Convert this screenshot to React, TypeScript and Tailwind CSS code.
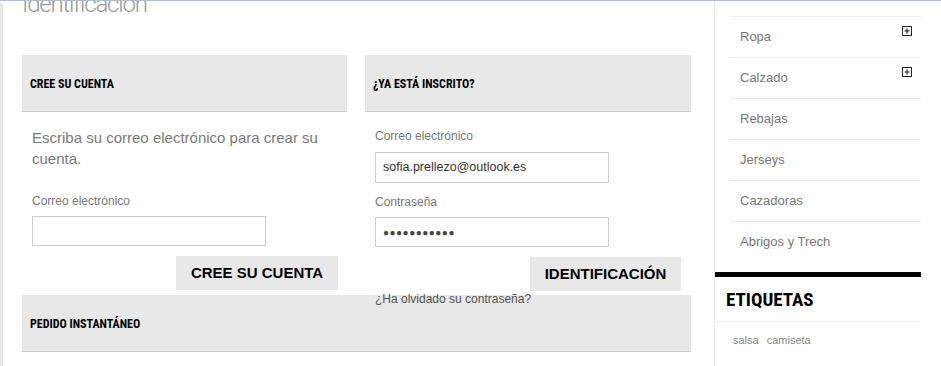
import React from "react";

const cond = { fontFamily: '"Roboto Condensed", "Liberation Sans Narrow", Roboto, sans-serif' };

function PlusBox() {
  return (
    <svg width="10" height="10" viewBox="0 0 10 10" className="block">
      <rect x="0.5" y="0.5" width="9" height="9" fill="none" stroke="#222" strokeWidth="1" />
      <path d="M2.5 5H7.5M5 2.5V7.5" stroke="#222" strokeWidth="1.2" />
    </svg>
  );
}

export default function App() {
  const cats = [
    { name: "Ropa", plus: true },
    { name: "Calzado", plus: true },
    { name: "Rebajas", plus: false },
    { name: "Jerseys", plus: false },
    { name: "Cazadoras", plus: false },
    { name: "Abrigos y Trech", plus: false },
  ];
  return (
    <div
      className="w-[941px] h-[366px] overflow-hidden bg-white border-t border-[#a9c0dc] flex"
      style={{ fontFamily: '"Liberation Sans", Arial, sans-serif' }}
    >
      <div className="w-[3px] mt-[2px] bg-[#e8e8e8] shrink-0" />
      {/* main */}
      <div className="w-[711px] shrink-0 pl-[19px] pr-[23px]">
        <h1
          className="text-[24px] leading-[24px] font-light text-[#999] mt-[-9px] h-[63px] tracking-[-1.2px]"
          style={{ fontFamily: "Roboto, sans-serif" }}
        >
          Identificación
        </h1>
        <div className="grid grid-cols-[325px_326px] gap-x-[18px] h-[240px]">
          {/* left column */}
          <div className="flex flex-col">
            <div className="h-[57px] bg-[#e8e8e8] border-b border-[#ccc] flex items-center pl-[8px] pt-[1px]">
              <span className="text-[12px] font-bold text-black" style={cond}>
                CREE SU CUENTA
              </span>
            </div>
            <p className="mt-[15px] pl-[10px] pr-[14px] text-[15px] leading-[21px] text-[#7a7a7a]">
              Escriba su correo electrónico para crear su cuenta.
            </p>
            <label className="mt-[24px] pl-[10px] text-[12px] leading-[16px] text-[#777]">Correo electrónico</label>
            <div className="mt-[7px] ml-[10px] w-[234px] h-[30px] border border-[#ccc] bg-white" />
            <div className="flex justify-end pr-[9px] mt-[10px]">
              <button className="w-[162px] h-[34px] bg-[#e8e8e8] text-[15px] font-bold text-black">
                CREE SU CUENTA
              </button>
            </div>
          </div>
          {/* right column */}
          <div className="flex flex-col">
            <div className="h-[57px] bg-[#e8e8e8] border-b border-[#ccc] flex items-center pl-[8px] pt-[1px]">
              <span className="text-[12px] font-bold text-black" style={cond}>
                ¿YA ESTÁ INSCRITO?
              </span>
            </div>
            <label className="mt-[16px] pl-[10px] text-[12px] leading-[16px] text-[#777]">Correo electrónico</label>
            <div className="mt-[8px] ml-[10px] w-[234px] h-[31px] border border-[#ccc] bg-white flex items-center pl-[7px] text-[12.5px] text-[#333]">
              sofia.prellezo@outlook.es
            </div>
            <label className="mt-[11px] pl-[10px] text-[12px] leading-[16px] text-[#777]">Contraseña</label>
            <div className="mt-[7px] ml-[10px] w-[234px] h-[30px] border border-[#ccc] bg-white flex items-center pl-[7px] text-[10px] tracking-[0.5px] text-[#444]">
              ●●●●●●●●●●●
            </div>
            <div className="flex justify-end pr-[10px] mt-[10px]">
              <button className="w-[151px] h-[34px] bg-[#e8e8e8] text-[15px] font-bold text-black">
                IDENTIFICACIÓN
              </button>
            </div>
            <a className="relative z-10 pl-[10px] text-[12px] leading-[16px] text-[#555]">
              ¿Ha olvidado su contraseña?
            </a>
          </div>
        </div>
        <div className="h-[57px] bg-[#e8e8e8] border-b border-[#ccc] flex items-center pl-[8px] pt-[1px]">
          <span className="text-[12px] font-bold text-black" style={cond}>
            PEDIDO INSTANTÁNEO
          </span>
        </div>
      </div>
      {/* sidebar */}
      <div className="w-[227px] shrink-0 border-l border-[#eee] flex flex-col">
        <ul className="mt-[15px] ml-[15px] mr-[20px]">
          {cats.map((c) => (
            <li
              key={c.name}
              className="h-[41px] border-t border-[#eee] flex items-start justify-between pl-[10px] pr-[9px]"
            >
              <span className="mt-[10px] text-[13px] text-[#777]">{c.name}</span>
              {c.plus && (
                <span className="mt-[9px]">
                  <PlusBox />
                </span>
              )}
            </li>
          ))}
        </ul>
        <div className="mt-[10px] mr-[20px] h-[5px] bg-black" />
        <div className="mr-[20px] h-[45px] border-b border-[#eee] flex items-center pl-[11px] pt-[3px]">
          <span className="text-[19px] font-bold text-black" style={cond}>
            ETIQUETAS
          </span>
        </div>
        <div className="mt-[10px] pl-[18px] flex gap-[8px] text-[11px] text-[#888]">
          <span>salsa</span>
          <span>camiseta</span>
        </div>
      </div>
    </div>
  );
}
